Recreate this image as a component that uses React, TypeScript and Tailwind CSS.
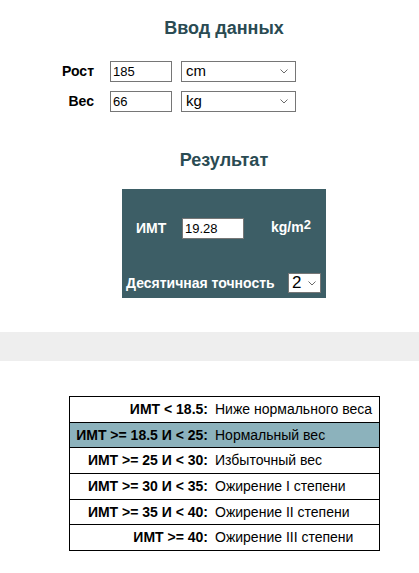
import React from "react";

const Chevron = () => (
  <svg width="8" height="5" viewBox="0 0 8 5" className="shrink-0">
    <path d="M0.5 0.5 L4 4 L7.5 0.5" fill="none" stroke="#6b6b6b" strokeWidth="1" />
  </svg>
);

const rows: [string, string, boolean, string][] = [
  ["ИМТ < 18.5:", "Ниже нормального веса", false, "h-[26px] border-b border-black"],
  ["ИМТ >= 18.5 И < 25:", "Нормальный вес", true, "h-[25px] border-b border-black"],
  ["ИМТ >= 25 И < 30:", "Избыточный вес", false, "h-[26px] border-b border-black"],
  ["ИМТ >= 30 И < 35:", "Ожирение I степени", false, "h-[26px] border-b border-black"],
  ["ИМТ >= 35 И < 40:", "Ожирение II степени", false, "h-[25px] border-b border-black"],
  ["ИМТ >= 40:", "Ожирение III степени", false, "h-[25px]"],
];

export default function App() {
  return (
    <div className="w-[419px] min-h-[573px] bg-white text-black font-['Liberation_Sans',Arial,sans-serif]">
      <div className="pl-[29px] pt-[18px] text-center">
        <h1 className="text-[18px] leading-[21px] font-bold text-[#2a4b53]">Ввод данных</h1>
      </div>
      <div className="mt-[22px] flex flex-col gap-[9px]">
        {[
          ["Рост", "185", "cm"],
          ["Вес", "66", "kg"],
        ].map(([l, v, u]) => (
          <div key={l} className="flex items-center h-[21px]">
            <div className="w-[94px] text-right text-[14px] font-bold">{l}</div>
            <div className="ml-[16px] w-[62px] h-[21px] border border-[#767676] bg-white text-[13px] leading-[19px] pl-[2px]">
              {v}
            </div>
            <div className="ml-[9px] w-[115px] h-[21px] border border-[#767676] bg-white flex items-center justify-between pl-[4px] pr-[7px] text-[15px]">
              <span>{u}</span>
              <Chevron />
            </div>
          </div>
        ))}
      </div>
      <div className="pl-[29px] mt-[38px] text-center">
        <h2 className="text-[18px] leading-[21px] font-bold text-[#2a4b53]">Результат</h2>
      </div>
      <div className="mt-[18px] ml-[122px] w-[204px] h-[109px] bg-[#3d5e66] text-white flex flex-col">
        <div className="mt-[29px] flex items-center h-[21px] pl-[14px]">
          <span className="text-[14px] font-bold w-[31px]">ИМТ</span>
          <div className="ml-[15px] w-[62px] h-[21px] border border-[#767676] bg-white text-black text-[13px] leading-[19px] pl-[2px]">
            19.28
          </div>
          <span className="ml-[27px] text-[14px] font-bold -mt-[2px]">
            kg/m<span className="text-[13px] relative -top-[3px]">2</span>
          </span>
        </div>
        <div className="mt-[34px] flex items-center h-[20px] pl-[4px] pr-[5px]">
          <span className="text-[14px] font-bold">Десятичная точность</span>
          <div className="ml-auto w-[33px] h-[20px] bg-white text-black flex items-center justify-between pl-[3px] pr-[4px] text-[17px] border border-[#767676]">
            <span>2</span>
            <Chevron />
          </div>
        </div>
      </div>
      <div className="mt-[34px] h-[29px] bg-[#eeeeee]" />
      <div className="mt-[35px] ml-[69px] w-[311px] border border-black text-[14px]">
        {rows.map(([a, b, hl, cls]) => (
          <div key={a} className={`flex items-center ${cls} ${hl ? "bg-[#8cb2bc]" : ""}`}>
            <div className="w-[139px] text-right font-bold pr-[1px] whitespace-nowrap">{a}</div>
            <div className="pl-[6px] whitespace-nowrap">{b}</div>
          </div>
        ))}
      </div>
    </div>
  );
}
